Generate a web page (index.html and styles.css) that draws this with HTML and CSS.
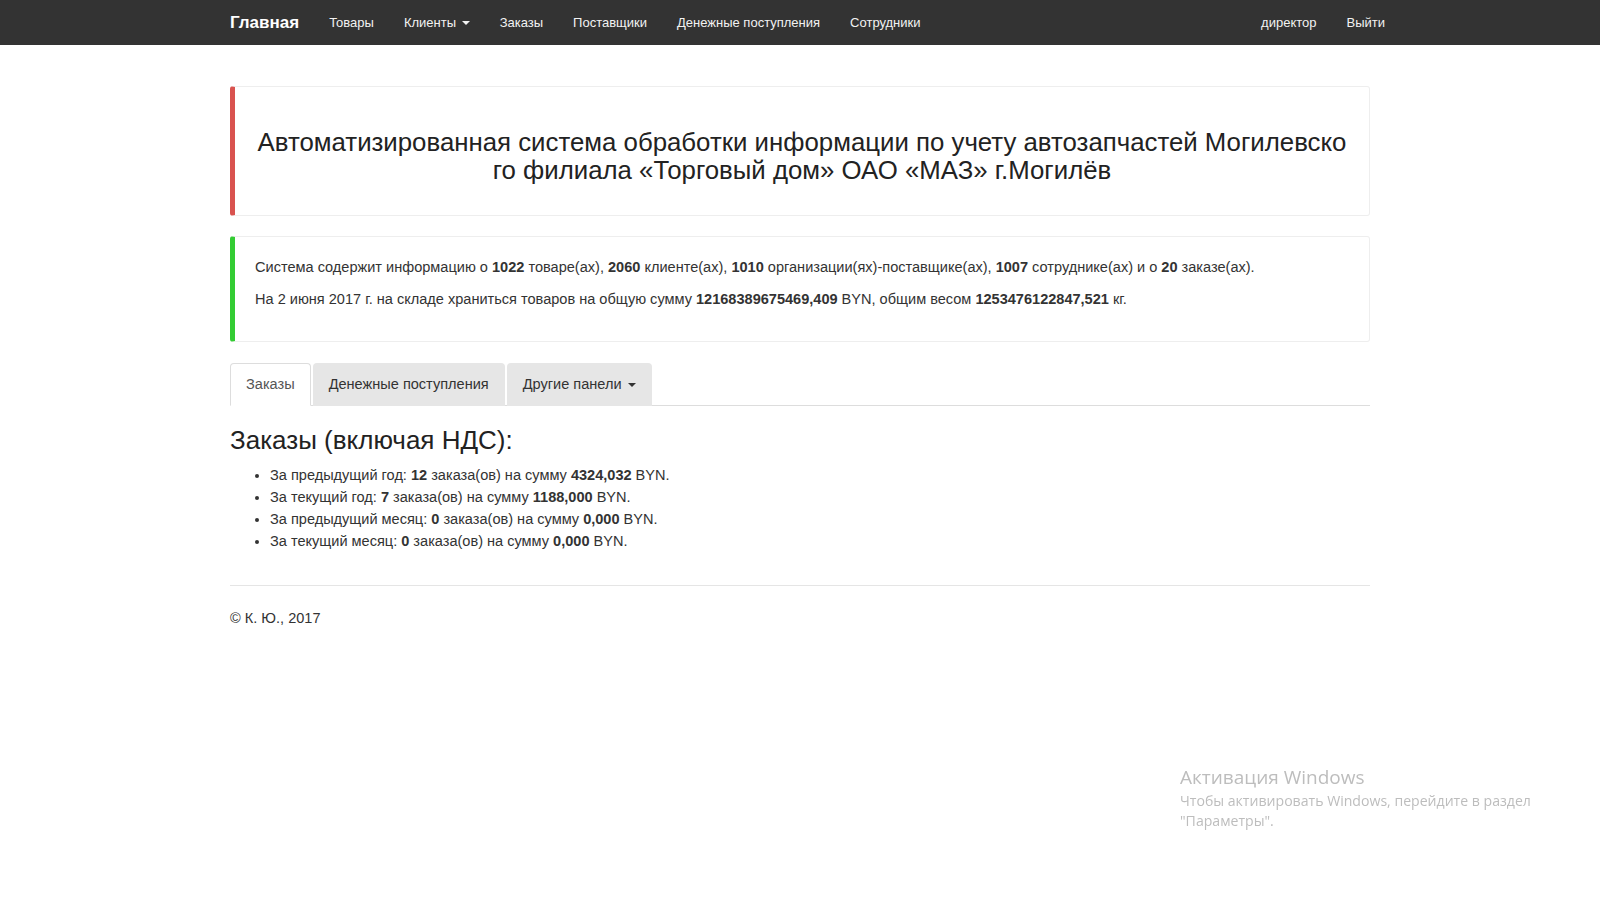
FILE: index.html
```html
<!DOCTYPE html>
<html lang="ru">
<head>
<meta charset="utf-8">
<title>Главная</title>
<link rel="stylesheet" href="styles.css">
</head>
<body>
<nav class="navbar">
  <div class="container nav-inner">
    <a class="brand" href="#">Главная</a>
    <ul class="nav-links">
      <li><a href="#">Товары</a></li>
      <li><a href="#">Клиенты <span class="caret"></span></a></li>
      <li><a href="#">Заказы</a></li>
      <li><a href="#">Поставщики</a></li>
      <li><a href="#">Денежные поступления</a></li>
      <li><a href="#">Сотрудники</a></li>
    </ul>
    <ul class="nav-links nav-right">
      <li><a href="#">директор</a></li>
      <li><a href="#">Выйти</a></li>
    </ul>
  </div>
</nav>

<main class="container main">
  <div class="callout callout-danger">
    <h3 class="callout-title">Автоматизированная система обработки информации по учету автозапчастей Могилевско<br>го филиала «Торговый дом» ОАО «МАЗ» г.Могилёв</h3>
  </div>

  <div class="callout callout-success">
    <p>Система содержит информацию о <b>1022</b> товаре(ах), <b>2060</b> клиенте(ах), <b>1010</b> организации(ях)-поставщике(ах), <b>1007</b> сотруднике(ах) и о <b>20</b> заказе(ах).</p>
    <p>На 2 июня 2017 г. на складе храниться товаров на общую сумму <b>12168389675469,409</b> BYN, общим весом <b>1253476122847,521</b> кг.</p>
  </div>

  <ul class="tabs">
    <li><a class="tab active" href="#">Заказы</a></li>
    <li><a class="tab" href="#">Денежные поступления</a></li>
    <li><a class="tab" href="#">Другие панели <span class="caret caret-dark"></span></a></li>
  </ul>

  <h3 class="section-title">Заказы (включая НДС):</h3>
  <ul class="stats">
    <li>За предыдущий год: <b>12</b> заказа(ов) на сумму <b>4324,032</b> BYN.</li>
    <li>За текущий год: <b>7</b> заказа(ов) на сумму <b>1188,000</b> BYN.</li>
    <li>За предыдущий месяц: <b>0</b> заказа(ов) на сумму <b>0,000</b> BYN.</li>
    <li>За текущий месяц: <b>0</b> заказа(ов) на сумму <b>0,000</b> BYN.</li>
  </ul>

  <footer class="footer">
    <hr class="rule">
    <p>© К. Ю., 2017</p>
  </footer>
</main>

<div class="watermark">
  <div class="wm-title">Активация Windows</div>
  <div class="wm-text">Чтобы активировать Windows, перейдите в раздел<br>"Параметры".</div>
</div>
</body>
</html>
```

FILE: styles.css
```css
* { box-sizing: border-box; }

body {
  margin: 0;
  font-family: "Liberation Sans", Arial, sans-serif;
  font-size: 14.55px;
  line-height: 21.43px;
  color: #333;
  background: #fff;
}

a { text-decoration: none; }

.container {
  width: 1170px;
  margin: 0 auto;
  padding: 0 15px;
}

/* navbar */
.navbar {
  background: #333;
  height: 45px;
}
.nav-inner {
  display: flex;
  align-items: center;
  height: 45px;
}
.brand {
  margin-left: -15px;
  padding: 0 15px;
  font-size: 17px;
  font-weight: bold;
  line-height: 20px;
  color: #fff;
}
.nav-links {
  display: flex;
  list-style: none;
  margin: 0;
  padding: 0;
}
.nav-links a {
  display: block;
  padding: 0 15px;
  font-size: 13px;
  line-height: 20px;
  color: #f2f2f2;
}
.nav-right {
  margin-left: auto;
  margin-right: -30px;
}
.caret {
  display: inline-block;
  width: 0;
  height: 0;
  margin-left: 2px;
  vertical-align: middle;
  border-top: 4px solid #f2f2f2;
  border-left: 4px solid transparent;
  border-right: 4px solid transparent;
}
.caret-dark { border-top-color: #333; }

/* main */
.main {
  padding-top: 21px;
}
.callout {
  margin: 20px 0;
  padding: 20px;
  border: 1px solid #eee;
  border-left-width: 5px;
  border-radius: 3px;
}
.callout-danger {
  padding: 21px 10px;
  border-left-color: #d9534f;
}
.callout-success { border-left-color: #33cc33; }

.callout-title {
  margin: 20px 0 10px;
  font-size: 25.8px;
  line-height: 28px;
  font-weight: normal;
  text-align: center;
  white-space: nowrap;
  color: #222;
}
.callout p {
  margin: 0 0 10.5px;
}

/* tabs */
.tabs {
  display: flex;
  list-style: none;
  margin: 21px 0 0;
  padding: 0;
  border-bottom: 1px solid #ddd;
}
.tabs li {
  margin-bottom: -1px;
}
.tab {
  display: block;
  margin-right: 2px;
  padding: 10px 15px;
  border: 1px solid transparent;
  border-radius: 4px 4px 0 0;
  background: #e6e6e6;
  color: #333;
}
.tab.active {
  background: #fff;
  color: #555;
  border-color: #ddd #ddd transparent;
}

.section-title {
  margin: 20px 0 10px;
  font-size: 26px;
  line-height: 1.1;
  font-weight: normal;
  color: #222;
}
.stats {
  margin: 0 0 10px;
  padding-left: 40px;
}
.stats li {
  line-height: 21.9px;
}

.footer {
  padding-top: 2px;
}
.rule {
  margin: 20px 0 22px;
  border: 0;
  border-top: 1px solid #e5e5e5;
}
.footer p { margin: 0 0 10px; }

/* overlay watermark */
.watermark {
  position: fixed;
  left: 1180px;
  top: 764px;
  font-family: "Open Sans", "Noto Sans", sans-serif;
  color: #bdbdbd;
}
.wm-title {
  font-size: 19px;
  line-height: 27px;
}
.wm-text {
  font-size: 14.1px;
  line-height: 19.5px;
}
```
